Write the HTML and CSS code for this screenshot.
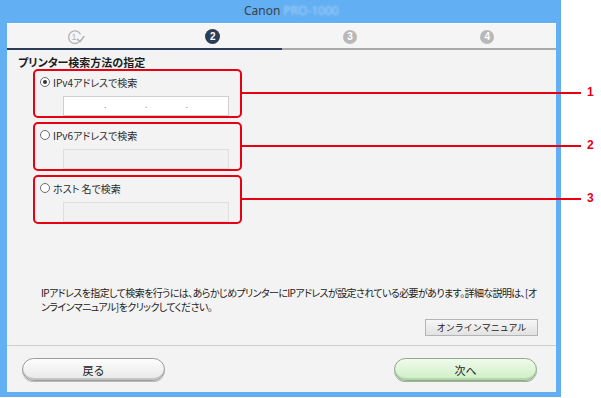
FILE: index.html
```html
<!DOCTYPE html>
<html lang="ja">
<head>
    <meta charset="UTF-8">
    <meta name="viewport" content="width=device-width, initial-scale=1.0">
    <title>プリンター検索方法の指定</title>
    <link rel="stylesheet" href="styles.css">
</head>
<body>
    <div class="window">
        <div class="titlebar">Canon <span class="model">PRO-1000</span></div>

        <div class="panel">
            <div class="steps">
                <div class="step done">
                    <svg width="20" height="18" viewBox="0 0 20 18">
                        <path d="M14.5 6.2 A6.3 6.3 0 1 0 12.6 14.3" fill="none" stroke="#b3b3b3" stroke-width="1.3"/>
                        <text x="8" y="12.3" font-size="9" font-family="Liberation Sans, sans-serif" fill="#b3b3b3" text-anchor="middle">1</text>
                        <path d="M11.6 11.4 L13.8 13.8 L18 8.6" fill="none" stroke="#b3b3b3" stroke-width="1.6" stroke-linecap="round" stroke-linejoin="round"/>
                    </svg>
                </div>
                <div class="step done"><span class="num current">2</span></div>
                <div class="step"><span class="num">3</span></div>
                <div class="step"><span class="num">4</span></div>
            </div>

            <div class="content">
                <h2>プリンター検索方法の指定</h2>

                <div class="options">
                    <div class="option">
                        <div class="radio-row"><span class="radio checked"></span>IPv4アドレスで検索</div>
                        <div class="field ip">
                            <span class="dot">.</span><span class="dot">.</span><span class="dot">.</span>
                        </div>
                        <span class="callout"><b>1</b></span>
                    </div>
                    <div class="option">
                        <div class="radio-row"><span class="radio"></span>IPv6アドレスで検索</div>
                        <div class="field disabled"></div>
                        <span class="callout"><b>2</b></span>
                    </div>
                    <div class="option">
                        <div class="radio-row"><span class="radio"></span>ホスト 名で検索</div>
                        <div class="field disabled"></div>
                        <span class="callout"><b>3</b></span>
                    </div>
                </div>

                <p class="note">IPアドレスを指定して検索を行うには、あらかじめプリンターにIPアドレスが設定されている必要があります。詳細な説明は、[オ<br>ンラインマニュアル]をクリックしてください。</p>

                <div class="manual-row">
                    <button class="btn-manual">オンラインマニュアル</button>
                </div>
            </div>

            <div class="footer">
                <button class="pill">戻る</button>
                <button class="pill next">次へ</button>
            </div>
        </div>
    </div>
</body>
</html>
```

FILE: styles.css
```css
/* General Styles */
body {
    margin: 0;
    background-color: white;
    font-family: "Noto Sans CJK JP", "Noto Sans", sans-serif;
    font-feature-settings: "palt" 1;
    color: #222;
}

.window {
    width: 549px;
    height: 392px;
    padding: 0 5px 5px 7px;
    background-color: #62aff3; /* blue window frame */
    display: flex;
    flex-direction: column;
}

.titlebar {
    height: 23px;
    line-height: 22px;
    text-align: center;
    font-family: "Noto Sans", sans-serif;
    font-size: 12px;
    color: #3a3f48;
    padding-left: 20px;
}

.model {
    color: #a9d0f7;
    filter: blur(0.9px);
}

.panel {
    flex: 1;
    background-color: #f3f3f3;
    display: flex;
    flex-direction: column;
}

/* Step indicator */
.steps {
    display: flex;
    height: 26px;
    border-top: 1px solid #fafafa;
    background-color: #f5f5f5;
}

.step {
    flex: 1;
    display: flex;
    justify-content: center;
    align-items: center;
    border-bottom: 2px solid #a9a9a9;
    padding-top: 1px;
}

.step.done {
    border-bottom-color: #2e3d57;
}

.num {
    width: 14px;
    height: 14px;
    border-radius: 50%;
    background-color: #b8b8b8;
    color: white;
    font-family: "Liberation Sans", sans-serif;
    font-weight: bold;
    font-size: 10px;
    line-height: 14px;
    text-align: center;
}

.num.current {
    width: 15px;
    height: 15px;
    line-height: 15px;
    background-color: #2e3d57;
}

/* Main content */
.content {
    flex: 1;
    display: flex;
    flex-direction: column;
    padding: 0 18px 0 11px;
}

h2 {
    margin: 5px 0 0;
    font-size: 11px;
    line-height: 14px;
    font-weight: bold;
    color: #1c1c1c;
}

.options {
    display: flex;
    flex-direction: column;
    gap: 4px;
    margin: 0 0 0 15px;
}

.option {
    position: relative;
    width: 209px;
    height: 49px;
    box-sizing: border-box;
    border: 2px solid #e60012;
    border-radius: 5px;
    padding: 5px 0 0 5px;
}

.radio-row {
    display: flex;
    align-items: center;
    height: 12px;
    font-size: 10px;
    font-weight: normal;
    color: #2a2a2a;
}

.radio {
    width: 8px;
    height: 8px;
    border: 1px solid #6d6d6d;
    border-radius: 50%;
    background-color: white;
    margin-right: 3px;
    position: relative;
}

.radio.checked::after {
    content: "";
    position: absolute;
    left: 2px;
    top: 2px;
    width: 4px;
    height: 4px;
    border-radius: 50%;
    background-color: #333;
}

.field {
    margin: 8px 0 0 23px;
    width: 166px;
    height: 20px;
    box-sizing: border-box;
    border: 1px solid #cfcfcf;
    background-color: white;
}

.field.ip {
    display: flex;
    justify-content: space-around;
    padding: 0 21px;
    font-size: 9px;
    line-height: 15px;
    color: #999;
}

.field.disabled {
    background-color: #f1f1f1;
    border-color: #dedede;
}

/* Red annotation lines */
.callout {
    position: absolute;
    left: 100%;
    top: 50%;
    width: 341px;
    height: 2px;
    margin-top: -2px;
    background-color: #e60012;
}

.callout b {
    position: absolute;
    left: 347px;
    top: -7px;
    font-family: "Liberation Sans", sans-serif;
    font-size: 12px;
    line-height: 14px;
    color: #e60012;
}

.note {
    margin: auto -12px 0 23px;
    font-size: 10px;
    letter-spacing: -0.6px;
    line-height: 14px;
    white-space: nowrap;
    color: #222;
}

.manual-row {
    display: flex;
    justify-content: flex-end;
    margin: 5px 0 9px;
}

.btn-manual {
    width: 113px;
    height: 17px;
    padding: 0;
    border: 1px solid #b4b4b4;
    background: linear-gradient(#f6f6f6, #e2e2e2);
    font-family: inherit;
    font-size: 9px;
    color: #222;
}

/* Bottom buttons */
.footer {
    height: 47px;
    border-top: 1px solid #cdcdcd;
    display: flex;
    justify-content: space-between;
    padding: 12px 19px 0 15px;
    box-sizing: border-box;
}

.pill {
    width: 143px;
    height: 23px;
    border: 1px solid #9a9a9a;
    border-radius: 12px;
    background: linear-gradient(#fdfdfd, #e8e8e8);
    box-shadow: inset 0 -2px 0 #c4c4c4, 0 1px 0 #bbb;
    font-family: inherit;
    font-size: 11px;
    color: #222;
    padding: 0;
}

.pill.next {
    border-color: #8fa98a;
    background: linear-gradient(#f0fbec, #cdefc4);
    box-shadow: inset 0 -2px 0 #b4d6ab, 0 1px 0 #9bb596;
}
```
